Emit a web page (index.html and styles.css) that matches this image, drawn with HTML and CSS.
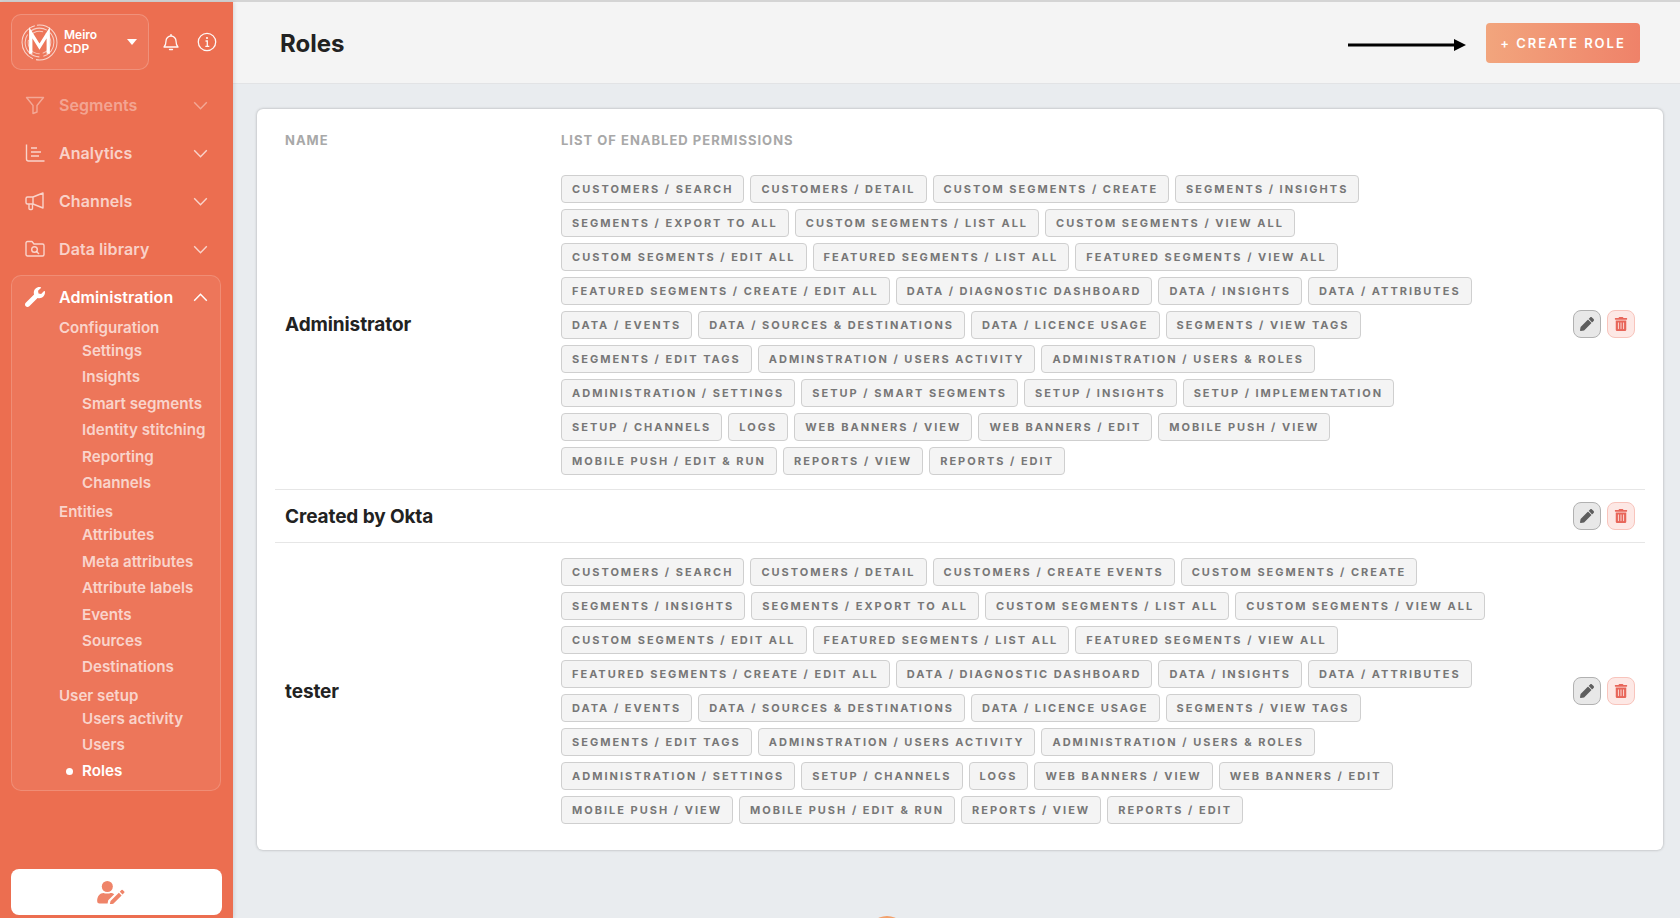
FILE: index.html
```html
<!DOCTYPE html>
<html lang="en">
<head>
<meta charset="utf-8">
<title>Roles</title>
<link rel="stylesheet" href="styles.css">
</head>
<body>
<div class="app">
  <aside class="sidebar">
    <div class="top-row">
      <div class="brand">
        <svg class="logo" viewBox="0 0 36 36" fill="none" stroke="#fff">
          <circle cx="18" cy="18" r="17" stroke-width="1" stroke-opacity=".7" stroke-dasharray="30 3 42 2"/>
          <circle cx="18" cy="18" r="14" stroke-width="1" stroke-opacity=".65" stroke-dasharray="18 4 30 3"/>
          <circle cx="18" cy="18" r="11" stroke-width="1" stroke-opacity=".6" stroke-dasharray="14 3 20 4"/>
          <path d="M9.500 29V8.500L18 22l8.500-13.500V29" stroke-width="3.200"/>
        </svg>
        <span class="brand-name">Meiro<br>CDP</span>
        <span class="caret"></span>
      </div>
      <svg class="top-icon" viewBox="0 0 20 20" fill="none" stroke="#fff" stroke-width="1.300"><path d="M3 15c1.500-1.500 2-2.500 2-6a5 5 0 0 1 10 0c0 3.500.5 4.500 2 6z" stroke-linejoin="round"/><path d="M8.500 17.500h3" stroke-linecap="round"/><path d="M10 2v2"/></svg>
      <svg class="top-icon" viewBox="0 0 20 20" fill="none" stroke="#fff" stroke-width="1.300"><circle cx="10" cy="10" r="8.700"/><circle cx="10" cy="6" r="1.100" fill="#fff" stroke="none"/><path d="M8.500 9H10.300V14M8.300 14.300h4"/></svg>
    </div>

    <nav class="nav">
      <div class="nav-item is-disabled">
        <svg class="nav-icon" viewBox="0 0 20 20" fill="none" stroke="currentColor" stroke-width="1.400"><path d="M1.500 2.500h17l-6.500 8v6.500l-4 1.500v-8z" stroke-linejoin="round"/></svg>
        <span class="nav-label">Segments</span>
        <svg class="chev" viewBox="0 0 16 10" fill="none" stroke="currentColor" stroke-width="1.600"><path d="M1 1.500l7 7 7-7"/></svg>
      </div>
      <div class="nav-item">
        <svg class="nav-icon" viewBox="0 0 20 20" fill="none" stroke="currentColor" stroke-width="1.400"><path d="M1.500 1.500V16a2 2 0 0 0 2 2h16M6 5h6M6 9h10M6 13h8"/></svg>
        <span class="nav-label">Analytics</span>
        <svg class="chev" viewBox="0 0 16 10" fill="none" stroke="currentColor" stroke-width="1.600"><path d="M1 1.500l7 7 7-7"/></svg>
      </div>
      <div class="nav-item">
        <svg class="nav-icon" viewBox="0 0 20 20" fill="none" stroke="currentColor" stroke-width="1.400"><path d="M18 2L8 6H2.500A1.500 1.500 0 0 0 1 7.500v4A1.500 1.500 0 0 0 2.500 13H8l10 4zM8 6v7M4 13v4.500a1 1 0 0 0 1 1h1.500a1 1 0 0 0 1-1V13" stroke-linejoin="round"/></svg>
        <span class="nav-label">Channels</span>
        <svg class="chev" viewBox="0 0 16 10" fill="none" stroke="currentColor" stroke-width="1.600"><path d="M1 1.500l7 7 7-7"/></svg>
      </div>
      <div class="nav-item">
        <svg class="nav-icon" viewBox="0 0 20 20" fill="none" stroke="currentColor" stroke-width="1.400"><path d="M1 4a1.500 1.500 0 0 1 1.500-1.500h4.500l2 2.500h8.500A1.500 1.500 0 0 1 19 6.500v9a1.500 1.500 0 0 1-1.500 1.500h-15A1.500 1.500 0 0 1 1 15.500z" stroke-linejoin="round"/><circle cx="9.500" cy="10.500" r="2.800"/><path d="M11.500 12.500l2.500 2.500"/></svg>
        <span class="nav-label">Data library</span>
        <svg class="chev" viewBox="0 0 16 10" fill="none" stroke="currentColor" stroke-width="1.600"><path d="M1 1.500l7 7 7-7"/></svg>
      </div>

      <div class="panel">
        <div class="panel-head">
          <svg class="nav-icon" viewBox="0 0 512 512" fill="#fff"><path d="M507.730 109.100c-2.240-9.030-13.540-12.090-20.120-5.510l-74.360 74.360-67.880-11.310-11.310-67.880 74.360-74.360c6.620-6.620 3.430-17.900-5.660-20.160-47.380-11.740-99.550.91-136.580 37.930-39.640 39.640-50.550 97.100-34.050 147.200L18.740 402.760c-24.990 24.990-24.990 65.510 0 90.500 24.990 24.990 65.510 24.990 90.500 0l213.210-213.210c50.120 16.710 107.470 5.680 147.370-34.220 37.070-37.070 49.700-89.320 37.910-136.730z"/></svg>
          <span class="nav-label">Administration</span>
          <svg class="chev" viewBox="0 0 16 10" fill="none" stroke="currentColor" stroke-width="1.600"><path d="M1 8.500l7-7 7 7"/></svg>
        </div>
        <div class="group">Configuration</div>
        <div class="sub">Settings</div>
        <div class="sub">Insights</div>
        <div class="sub">Smart segments</div>
        <div class="sub">Identity stitching</div>
        <div class="sub">Reporting</div>
        <div class="sub">Channels</div>
        <div class="group group-next">Entities</div>
        <div class="sub">Attributes</div>
        <div class="sub">Meta attributes</div>
        <div class="sub">Attribute labels</div>
        <div class="sub">Events</div>
        <div class="sub">Sources</div>
        <div class="sub">Destinations</div>
        <div class="group group-last">User setup</div>
        <div class="sub">Users activity</div>
        <div class="sub">Users</div>
        <div class="sub is-active">Roles</div>
      </div>
    </nav>

    <div class="user-btn">
      <svg class="user-icon" viewBox="0 0 30 26" fill="#ef8469"><circle cx="11" cy="7" r="6"/><path d="M0 22.500c0-5 3-8.500 7-8.500 1.500.8 6 .8 7.500 0 1.500 0 3 .5 4 1.500L12 22l-.7 3.500H2.500A2.500 2.500 0 0 1 0 23z"/><path d="M14.500 22.700l-.8 3.800 3.800-.8 9-9-3-3zM24.500 12.700l3 3 1.800-1.800a1 1 0 0 0 0-1.400l-1.600-1.600a1 1 0 0 0-1.400 0z"/></svg>
    </div>
  </aside>

  <main class="main">
    <header class="header">
      <h1 class="title">Roles</h1>
      <div class="header-right">
        <svg class="arrow" viewBox="0 0 118 12"><path d="M0 4.500h108v3H0z" fill="#000"/><path d="M106 0l12 6-12 6z" fill="#000"/></svg>
        <button class="create-btn">+ CREATE ROLE</button>
      </div>
    </header>

    <div class="content">
      <section class="card">
        <div class="cols">
          <div class="col-name">NAME</div>
          <div class="col-perm">LIST OF ENABLED PERMISSIONS</div>
        </div>

        <div class="row row-first">
          <div class="role-name">Administrator</div>
          <div class="tags">
            <span class="tag">CUSTOMERS / SEARCH</span><span class="tag">CUSTOMERS / DETAIL</span><span class="tag">CUSTOM SEGMENTS / CREATE</span><span class="tag">SEGMENTS / INSIGHTS</span><span class="tag">SEGMENTS / EXPORT TO ALL</span><span class="tag">CUSTOM SEGMENTS / LIST ALL</span><span class="tag">CUSTOM SEGMENTS / VIEW ALL</span><span class="tag">CUSTOM SEGMENTS / EDIT ALL</span><span class="tag">FEATURED SEGMENTS / LIST ALL</span><span class="tag">FEATURED SEGMENTS / VIEW ALL</span><span class="tag">FEATURED SEGMENTS / CREATE / EDIT ALL</span><span class="tag">DATA / DIAGNOSTIC DASHBOARD</span><span class="tag">DATA / INSIGHTS</span><span class="tag">DATA / ATTRIBUTES</span><span class="tag">DATA / EVENTS</span><span class="tag">DATA / SOURCES &amp; DESTINATIONS</span><span class="tag">DATA / LICENCE USAGE</span><span class="tag">SEGMENTS / VIEW TAGS</span><span class="tag">SEGMENTS / EDIT TAGS</span><span class="tag">ADMINSTRATION / USERS ACTIVITY</span><span class="tag">ADMINISTRATION / USERS &amp; ROLES</span><span class="tag">ADMINISTRATION / SETTINGS</span><span class="tag">SETUP / SMART SEGMENTS</span><span class="tag">SETUP / INSIGHTS</span><span class="tag">SETUP / IMPLEMENTATION</span><span class="tag">SETUP / CHANNELS</span><span class="tag">LOGS</span><span class="tag">WEB BANNERS / VIEW</span><span class="tag">WEB BANNERS / EDIT</span><span class="tag">MOBILE PUSH / VIEW</span><span class="tag">MOBILE PUSH / EDIT &amp; RUN</span><span class="tag">REPORTS / VIEW</span><span class="tag">REPORTS / EDIT</span>
          </div>
          <div class="actions">
            <button class="icon-btn edit"><svg viewBox="0 0 512 512"><path d="M497.900 142.100l-46.100 46.100c-4.700 4.700-12.300 4.700-17 0l-111-111c-4.700-4.700-4.700-12.300 0-17l46.100-46.100c18.700-18.700 49.100-18.700 67.900 0l60.100 60.100c18.800 18.700 18.800 49.100 0 67.900zM284.200 99.800L21.600 362.400.4 483.900c-2.900 16.400 11.400 30.600 27.800 27.800l121.500-21.300 262.600-262.600c4.700-4.700 4.700-12.300 0-17l-111-111c-4.800-4.700-12.400-4.700-17.100 0z"/></svg></button>
            <button class="icon-btn del"><svg viewBox="0 0 448 512"><path d="M32 464a48 48 0 0 0 48 48h288a48 48 0 0 0 48-48V128H32zm272-256a16 16 0 0 1 32 0v224a16 16 0 0 1-32 0zm-96 0a16 16 0 0 1 32 0v224a16 16 0 0 1-32 0zm-96 0a16 16 0 0 1 32 0v224a16 16 0 0 1-32 0zM432 32H312l-9.400-18.700A24 24 0 0 0 281.100 0H166.800a23.720 23.720 0 0 0-21.400 13.300L136 32H16A16 16 0 0 0 0 48v32a16 16 0 0 0 16 16h416a16 16 0 0 0 16-16V48a16 16 0 0 0-16-16z"/></svg></button>
          </div>
        </div>

        <div class="row row-empty">
          <div class="role-name">Created by Okta</div>
          <div class="tags"></div>
          <div class="actions">
            <button class="icon-btn edit"><svg viewBox="0 0 512 512"><path d="M497.900 142.100l-46.100 46.100c-4.700 4.700-12.300 4.700-17 0l-111-111c-4.700-4.700-4.700-12.300 0-17l46.100-46.100c18.700-18.700 49.100-18.700 67.900 0l60.100 60.100c18.800 18.700 18.800 49.100 0 67.900zM284.200 99.800L21.600 362.400.4 483.900c-2.900 16.400 11.400 30.600 27.800 27.800l121.500-21.300 262.600-262.600c4.700-4.700 4.700-12.300 0-17l-111-111c-4.800-4.700-12.400-4.700-17.100 0z"/></svg></button>
            <button class="icon-btn del"><svg viewBox="0 0 448 512"><path d="M32 464a48 48 0 0 0 48 48h288a48 48 0 0 0 48-48V128H32zm272-256a16 16 0 0 1 32 0v224a16 16 0 0 1-32 0zm-96 0a16 16 0 0 1 32 0v224a16 16 0 0 1-32 0zm-96 0a16 16 0 0 1 32 0v224a16 16 0 0 1-32 0zM432 32H312l-9.400-18.700A24 24 0 0 0 281.100 0H166.800a23.720 23.720 0 0 0-21.400 13.300L136 32H16A16 16 0 0 0 0 48v32a16 16 0 0 0 16 16h416a16 16 0 0 0 16-16V48a16 16 0 0 0-16-16z"/></svg></button>
          </div>
        </div>

        <div class="row row-last">
          <div class="role-name">tester</div>
          <div class="tags">
            <span class="tag">CUSTOMERS / SEARCH</span><span class="tag">CUSTOMERS / DETAIL</span><span class="tag">CUSTOMERS / CREATE EVENTS</span><span class="tag">CUSTOM SEGMENTS / CREATE</span><span class="tag">SEGMENTS / INSIGHTS</span><span class="tag">SEGMENTS / EXPORT TO ALL</span><span class="tag">CUSTOM SEGMENTS / LIST ALL</span><span class="tag">CUSTOM SEGMENTS / VIEW ALL</span><span class="tag">CUSTOM SEGMENTS / EDIT ALL</span><span class="tag">FEATURED SEGMENTS / LIST ALL</span><span class="tag">FEATURED SEGMENTS / VIEW ALL</span><span class="tag">FEATURED SEGMENTS / CREATE / EDIT ALL</span><span class="tag">DATA / DIAGNOSTIC DASHBOARD</span><span class="tag">DATA / INSIGHTS</span><span class="tag">DATA / ATTRIBUTES</span><span class="tag">DATA / EVENTS</span><span class="tag">DATA / SOURCES &amp; DESTINATIONS</span><span class="tag">DATA / LICENCE USAGE</span><span class="tag">SEGMENTS / VIEW TAGS</span><span class="tag">SEGMENTS / EDIT TAGS</span><span class="tag">ADMINSTRATION / USERS ACTIVITY</span><span class="tag">ADMINISTRATION / USERS &amp; ROLES</span><span class="tag">ADMINISTRATION / SETTINGS</span><span class="tag">SETUP / CHANNELS</span><span class="tag">LOGS</span><span class="tag">WEB BANNERS / VIEW</span><span class="tag">WEB BANNERS / EDIT</span><span class="tag">MOBILE PUSH / VIEW</span><span class="tag">MOBILE PUSH / EDIT &amp; RUN</span><span class="tag">REPORTS / VIEW</span><span class="tag">REPORTS / EDIT</span>
          </div>
          <div class="actions">
            <button class="icon-btn edit"><svg viewBox="0 0 512 512"><path d="M497.900 142.100l-46.100 46.100c-4.700 4.700-12.300 4.700-17 0l-111-111c-4.700-4.700-4.700-12.300 0-17l46.100-46.100c18.700-18.700 49.100-18.700 67.900 0l60.100 60.100c18.800 18.700 18.800 49.100 0 67.900zM284.200 99.800L21.600 362.400.4 483.900c-2.900 16.400 11.400 30.600 27.800 27.800l121.500-21.300 262.600-262.600c4.700-4.700 4.700-12.300 0-17l-111-111c-4.800-4.700-12.400-4.700-17.100 0z"/></svg></button>
            <button class="icon-btn del"><svg viewBox="0 0 448 512"><path d="M32 464a48 48 0 0 0 48 48h288a48 48 0 0 0 48-48V128H32zm272-256a16 16 0 0 1 32 0v224a16 16 0 0 1-32 0zm-96 0a16 16 0 0 1 32 0v224a16 16 0 0 1-32 0zm-96 0a16 16 0 0 1 32 0v224a16 16 0 0 1-32 0zM432 32H312l-9.400-18.700A24 24 0 0 0 281.100 0H166.800a23.720 23.720 0 0 0-21.400 13.300L136 32H16A16 16 0 0 0 0 48v32a16 16 0 0 0 16 16h416a16 16 0 0 0 16-16V48a16 16 0 0 0-16-16z"/></svg></button>
          </div>
        </div>
      </section>
      <div class="foot">
        <span class="foot-mark"></span>
        <span class="foot-tick"></span>
      </div>
    </div>
  </main>
</div>
</body>
</html>
```

FILE: styles.css
```css
* { box-sizing: border-box; }

html, body {
  margin: 0;
  height: 918px;
  overflow: hidden;
  background: #e9ecef;
  font-family: Inter, "Liberation Sans", sans-serif;
}

.app {
  display: flex;
  height: 918px;
  border-top: 2px solid #d4d4d4;
}

/* Sidebar */
.sidebar {
  width: 233px;
  flex: none;
  display: flex;
  flex-direction: column;
  padding: 12px 12px 3px 11px;
  background: #ec6e50;
  color: #fff;
  box-shadow: 1px 0 4px rgba(0, 0, 0, .12);
  position: relative;
  z-index: 1;
}

.top-row {
  display: flex;
  align-items: center;
  height: 56px;
}

.brand {
  width: 138px;
  height: 56px;
  flex: none;
  display: flex;
  align-items: center;
  padding-left: 9px;
  border: 1px solid rgba(255, 255, 255, .2);
  border-radius: 10px;
  background: rgba(255, 255, 255, .06);
}

.logo { width: 37px; height: 37px; flex: none; }

.brand-name {
  margin-left: 6px;
  font-size: 12px;
  line-height: 14px;
  font-weight: 600;
}

.caret {
  margin-left: 30px;
  border-left: 5px solid transparent;
  border-right: 5px solid transparent;
  border-top: 6px solid #fff;
}

.top-icon { width: 20px; height: 20px; flex: none; margin-left: 12px; opacity: .95; }
.top-icon + .top-icon { margin-left: 16px; }

.nav { margin-top: 11px; }

.nav-item, .panel-head {
  display: flex;
  align-items: center;
  padding-left: 14px;
  color: rgba(255, 255, 255, .7);
}

.nav-item { height: 48px; }
.nav-item.is-disabled { color: rgba(255, 255, 255, .4); }

.nav-icon { width: 20px; height: 20px; flex: none; }

.nav-label {
  margin-left: 14px;
  flex: 1;
  font-size: 16px;
  font-weight: 600;
  letter-spacing: .08px;
}

.chev { width: 15px; height: 9px; flex: none; margin-right: 13px; }

.panel {
  margin-top: 2px;
  padding-bottom: 5px;
  height: 516px;
  border: 1px solid rgba(255, 255, 255, .17);
  border-radius: 10px;
  background: rgba(255, 255, 255, .06);
}

.panel-head { height: 42px; padding-left: 13px; color: #fff; }
.panel-head .chev { margin-right: 12px; }

.group {
  height: 20px;
  line-height: 20px;
  padding-left: 47px;
  font-size: 15.1px;
  font-weight: 600;
  color: rgba(255, 255, 255, .7);
}

.group-next { margin-top: 6px; }
.group-last { margin-top: 5px; }

.sub {
  position: relative;
  height: 26.4px;
  line-height: 26.4px;
  padding-left: 70px;
  font-size: 15.2px;
  font-weight: 600;
  color: rgba(255, 255, 255, .7);
}

.sub.is-active { color: #fff; }

.sub.is-active::before {
  content: "";
  position: absolute;
  left: 54px;
  top: 10px;
  width: 7px;
  height: 7px;
  border-radius: 50%;
  background: #fff;
}

.user-btn {
  margin-top: auto;
  width: 211px;
  height: 46px;
  flex: none;
  display: flex;
  align-items: center;
  justify-content: center;
  background: #fff;
  border-radius: 8px;
}

.user-icon { width: 28px; height: 24px; margin-right: 12px; }

/* Main */
.main {
  flex: 1;
  min-width: 0;
  display: flex;
  flex-direction: column;
}

.header {
  height: 82px;
  flex: none;
  display: flex;
  align-items: center;
  justify-content: space-between;
  padding: 0 40px 0 47px;
  background: #f4f4f4;
  border-bottom: 1px solid #e2e3e5;
}

.title {
  margin: 2px 0 0;
  font-size: 24px;
  font-weight: 700;
  color: #222;
}

.header-right { display: flex; align-items: center; gap: 20px; }

.arrow { width: 118px; height: 12px; margin-top: 5px; }

.create-btn {
  width: 154px;
  height: 40px;
  border: 0;
  border-radius: 4px;
  background: linear-gradient(90deg, #f2a57d, #ef8269);
  color: #fff;
  font-family: inherit;
  font-size: 13px;
  font-weight: 600;
  letter-spacing: 2px;
}

.content { padding: 25px 17px 0 24px; }

.card {
  height: 741px;
  background: #fff;
  border-radius: 6px;
  box-shadow: 0 0 3px rgba(0, 0, 0, .28);
  padding: 0 18px 0 18px;
}

.cols {
  display: flex;
  height: 47px;
  padding: 22px 0 0 10px;
  font-size: 13px;
  line-height: 18px;
  font-weight: 700;
  letter-spacing: 1px;
  color: #a8a8a8;
}

.col-name { width: 276px; flex: none; }

.row {
  display: flex;
  align-items: center;
  padding-left: 10px;
  padding-right: 10px;
  border-bottom: 1px solid #e6e6e6;
}

.row-first { padding-top: 19px; padding-bottom: 14px; }
.row-first .role-name,
.row-first .actions { margin-bottom: 2px; }
.row-empty { height: 53px; }
.row-last { padding-top: 15px; border-bottom: 0; }

.role-name {
  width: 276px;
  flex: none;
  font-size: 19px;
  font-weight: 700;
  letter-spacing: -.1px;
  color: #222;
}

.tags {
  flex: 1;
  display: flex;
  flex-wrap: wrap;
  gap: 6px;
}

.tag {
  height: 28px;
  padding: 0 10px;
  line-height: 26px;
  border: 1px solid #cfcfcf;
  border-radius: 4px;
  background: #f4f4f4;
  font-size: 11px;
  font-weight: 700;
  letter-spacing: 2px;
  color: #777;
  white-space: nowrap;
}

.actions {
  width: 105px;
  flex: none;
  display: flex;
  justify-content: flex-end;
  gap: 6px;
}

.icon-btn {
  width: 28px;
  height: 28px;
  padding: 0;
  display: flex;
  align-items: center;
  justify-content: center;
  border-radius: 8px;
  border: 1px solid;
}

.icon-btn svg { width: 14px; height: 14px; }

.edit { background: #e8e8e8; border-color: #b1b1b1; }
.edit svg { fill: #5e5e5e; }
.del { background: #fde8e5; border-color: #f8c4bc; }
.del svg { fill: #e8665a; }

.foot {
  display: flex;
  align-items: flex-start;
  margin: 66px 0 0 610px;
}

.foot-mark {
  width: 40px;
  height: 40px;
  border-radius: 50%;
  background: #f2a06b;
}

.foot-tick {
  width: 2px;
  height: 3px;
  margin: 2px 0 0 95px;
  background: #bbb;
}
```
